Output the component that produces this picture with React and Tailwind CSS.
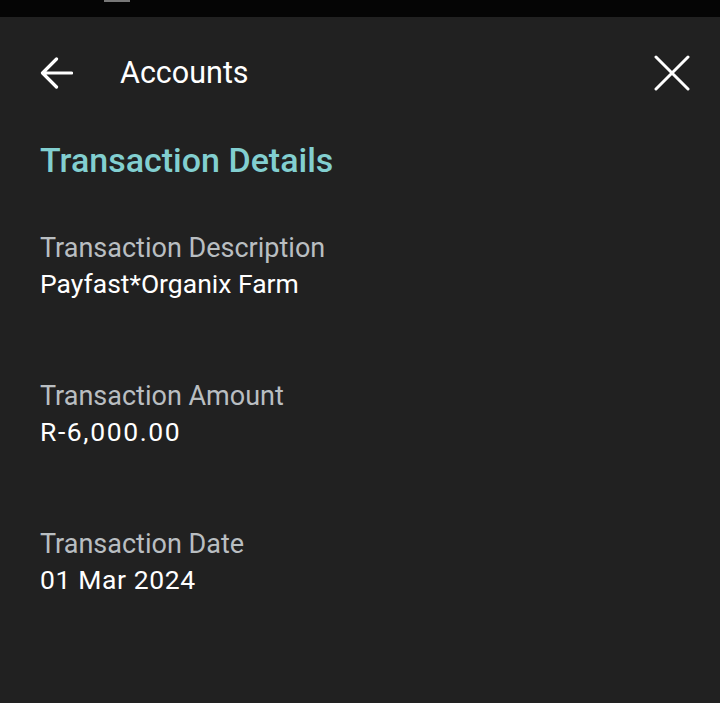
import React from 'react';

const details = [
  { label: 'Transaction Description', value: 'Payfast*Organix Farm', track: '' },
  { label: 'Transaction Amount', value: 'R-6,000.00', track: 'tracking-[1.6px]' },
  { label: 'Transaction Date', value: '01 Mar 2024', track: 'tracking-[0.6px]' },
];

const App = () => {
  return (
    <div className="min-h-[703px] bg-[#212121] font-['Roboto',sans-serif]">
      {/* status bar */}
      <div className="h-[17px] bg-[#050505] relative">
        <div className="absolute left-[104px] top-0 w-[26px] h-[2px] bg-[#777]" />
      </div>

      {/* header */}
      <div className="h-[112px] flex items-center pl-[40px] pr-[30px]">
        <svg width="33" height="34" viewBox="0 0 33 34" className="shrink-0">
          <path d="M31.5 17H3M16.5 3L2.5 17l14 14" fill="none" stroke="#fff" strokeWidth="3.2" strokeLinecap="round" strokeLinejoin="round" />
        </svg>
        <span className="ml-[47px] text-[30.5px] text-white leading-none">Accounts</span>
        <svg width="36" height="36" viewBox="0 0 36 36" className="ml-auto">
          <path d="M2 2l32 32M34 2L2 34" fill="none" stroke="#fff" strokeWidth="3" strokeLinecap="round" />
        </svg>
      </div>

      <div className="px-[40px]">
        <h1 className="text-[34px] font-medium text-[#82cfd0] leading-[40px] mt-[11px]">Transaction Details</h1>

        <div className="mt-[50px] flex flex-col gap-[76px]">
          {details.map((d) => (
            <div key={d.label} className="flex flex-col">
              <span className="text-[27px] text-[#b9bec1] leading-[36px]">{d.label}</span>
              <span className={`text-[26.5px] text-white leading-[36px] ${d.track}`}>{d.value}</span>
            </div>
          ))}
        </div>
      </div>
    </div>
  );
};

export default App;
